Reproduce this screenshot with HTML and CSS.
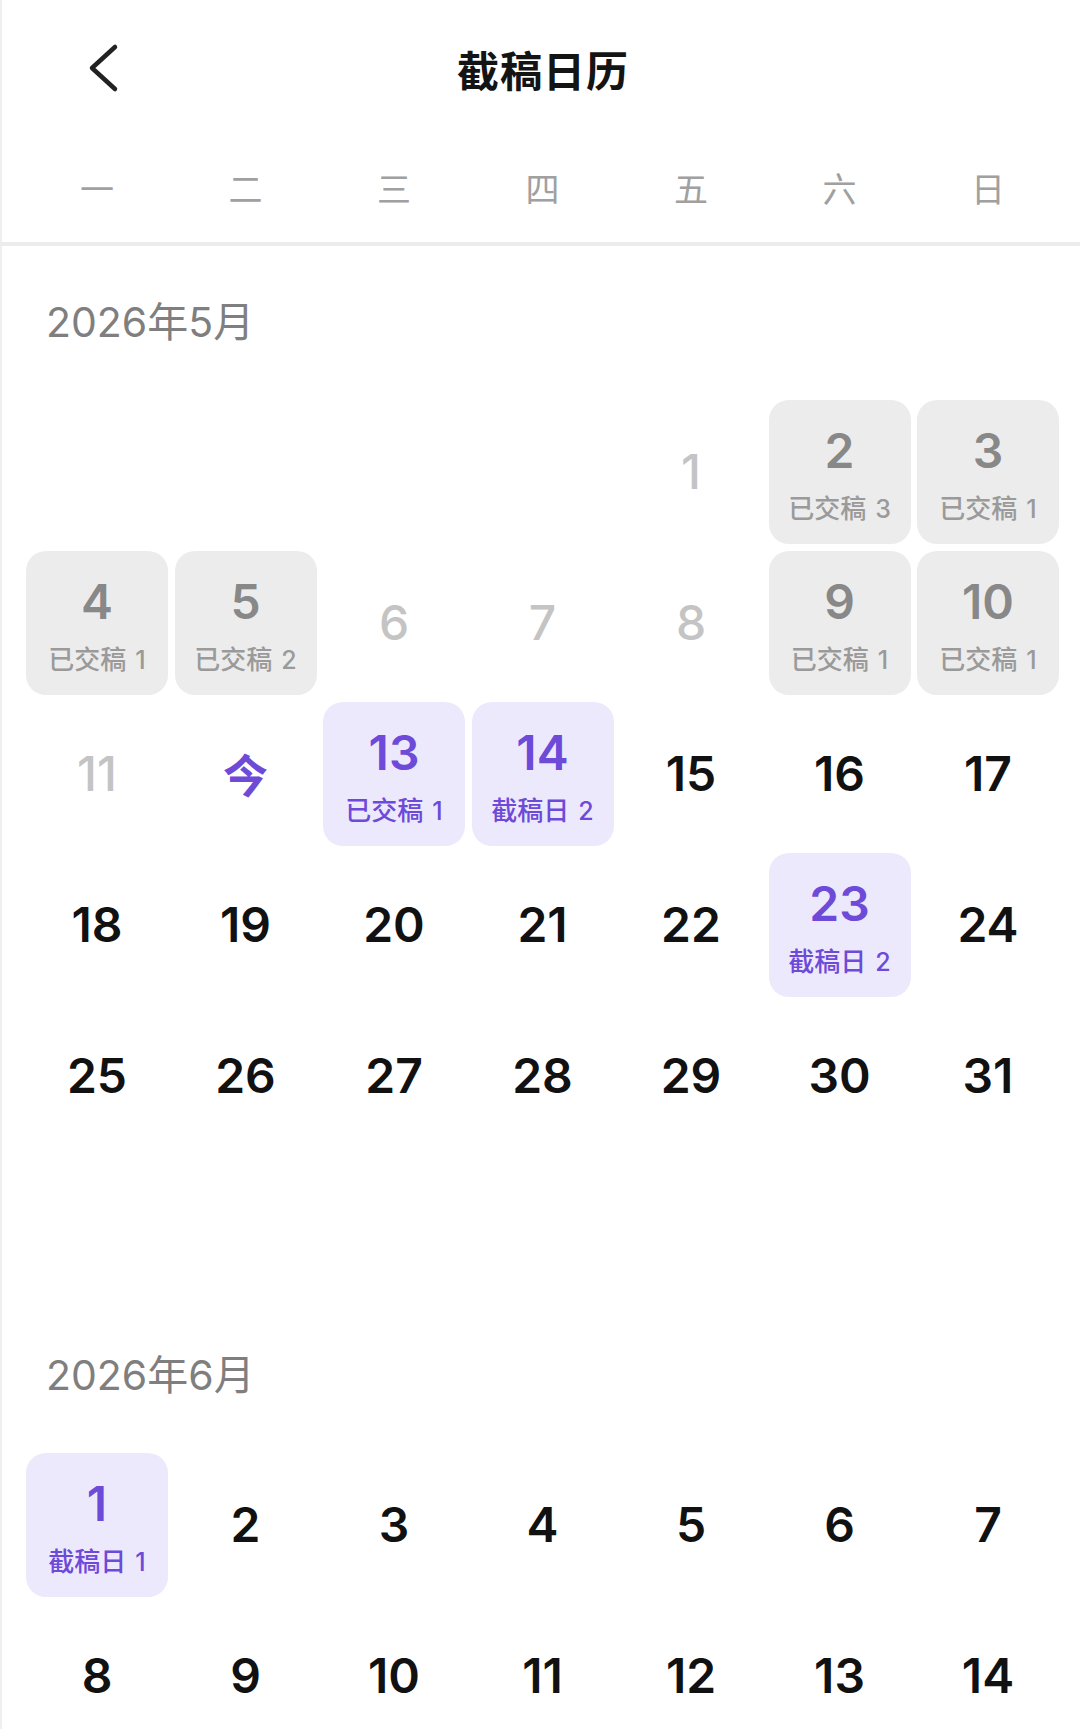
FILE: index.html
```html
<!DOCTYPE html>
<html lang="zh-CN">
<head>
    <meta charset="UTF-8">
    <meta name="viewport" content="width=device-width, initial-scale=1.0">
    <title>截稿日历</title>
    <link rel="stylesheet" href="styles.css">
</head>
<body>
    <!-- Top bar -->
    <header class="top-bar">
        <div class="back-btn">
            <svg width="34" height="52" viewBox="0 0 34 52">
                <polyline points="28,5 5,26 28,47" fill="none" stroke="#222" stroke-width="4.5" stroke-linecap="round" stroke-linejoin="round"/>
            </svg>
        </div>
        <h1 class="page-title">截稿日历</h1>
        <div></div>
    </header>

    <!-- Weekday header -->
    <div class="weekdays">
        <span>一</span><span>二</span><span>三</span><span>四</span><span>五</span><span>六</span><span>日</span>
    </div>

    <!-- Scrollable month list -->
    <div id="months" class="month-list"></div>

    <script>
        // day tags: kind "done" = grey (already handed in), otherwise purple
        const months = [
            {
                year: 2026, month: 5, past: 11, today: 12,
                tags: {
                    2: ['done', '已交稿', 3], 3: ['done', '已交稿', 1],
                    4: ['done', '已交稿', 1], 5: ['done', '已交稿', 2],
                    9: ['done', '已交稿', 1], 10: ['done', '已交稿', 1],
                    13: ['sub', '已交稿', 1], 14: ['due', '截稿日', 2],
                    23: ['due', '截稿日', 2]
                }
            },
            {
                year: 2026, month: 6, past: 0, today: 0,
                tags: { 1: ['due', '截稿日', 1] }
            }
        ];

        const container = document.getElementById('months');

        months.forEach(m => {
            const section = document.createElement('section');
            section.className = 'month';

            const title = document.createElement('div');
            title.className = 'month-title';
            title.textContent = `${m.year}年${m.month}月`;
            section.appendChild(title);

            const grid = document.createElement('div');
            grid.className = 'day-grid';

            // Monday first
            const firstDay = (new Date(m.year, m.month - 1, 1).getDay() + 6) % 7;
            const daysInMonth = new Date(m.year, m.month, 0).getDate();

            for (let i = 0; i < firstDay; i++) {
                grid.appendChild(document.createElement('div'));
            }

            for (let d = 1; d <= daysInMonth; d++) {
                const cell = document.createElement('div');
                cell.className = 'day';
                const tag = m.tags[d];

                if (tag) {
                    cell.classList.add('tagged', tag[0] === 'done' ? 'is-done' : 'is-active');
                    cell.innerHTML = `<span class="num">${d}</span><span class="tag">${tag[1]}<span class="count">${tag[2]}</span></span>`;
                } else if (d === m.today) {
                    cell.classList.add('is-today');
                    cell.innerHTML = `<span class="num">今</span>`;
                } else {
                    if (d <= m.past) cell.classList.add('is-past');
                    cell.innerHTML = `<span class="num">${d}</span>`;
                }
                grid.appendChild(cell);
            }

            section.appendChild(grid);
            container.appendChild(section);
        });
    </script>
</body>
</html>
```

FILE: styles.css
```css
/* Page */
body {
    margin: 0;
    width: 1080px;
    height: 100vh;
    display: flex;
    flex-direction: column;
    overflow: hidden;
    background: #fff;
    color: #111;
    font-family: Inter, "Noto Sans CJK SC", sans-serif;
    box-shadow: inset 2px 0 0 #efefef;
}

/* Top bar */
.top-bar {
    flex: none;
    height: 136px;
    display: grid;
    grid-template-columns: 1fr auto 1fr;
    align-items: center;
}

.back-btn {
    padding-left: 87px;
    display: flex;
    align-items: center;
}

.page-title {
    margin: 0;
    font-size: 42px;
    font-weight: 700;
    color: #141414;
    letter-spacing: 1px;
    padding-left: 6px;
}

/* Weekdays */
.weekdays {
    flex: none;
    height: 103px;
    padding-bottom: 3px;
    display: grid;
    grid-template-columns: repeat(7, 142px);
    column-gap: 6.5px;
    padding-left: 26px;
    align-items: center;
    border-bottom: 4px solid #ececec;
}

.weekdays span {
    text-align: center;
    font-family: "Noto Sans CJK SC", sans-serif;
    font-size: 34px;
    font-weight: 400;
    color: #a0a0a0;
}

/* Month list scrolls under the fixed header */
.month-list {
    flex: 1;
    overflow-y: auto;
    scrollbar-width: none;
}

/* Month block */
.month-title {
    height: 146px;
    padding-bottom: 8px;
    display: flex;
    align-items: center;
    padding-left: 46px;
    font-size: 41px;
    color: #7f7f7f;
}

.day-grid {
    display: grid;
    grid-template-columns: repeat(7, 142px);
    grid-template-rows: repeat(6, 144px);
    column-gap: 6.5px;
    row-gap: 7px;
    padding-left: 26px;
}

.day {
    display: flex;
    flex-direction: column;
    align-items: center;
    justify-content: center;
    border-radius: 20px;
}

.day .num {
    font-size: 48px;
    line-height: 56px;
    font-weight: 600;
    color: #111;
}

.day .tag {
    margin-top: 13px;
    font-size: 26px;
    line-height: 30px;
    font-weight: 500;
    font-family: "Noto Sans CJK SC", sans-serif;
    white-space: nowrap;
}

.day .tag .count {
    margin-left: 9px;
    font-family: Inter, sans-serif;
    font-weight: 500;
    font-size: 25px;
}

.day.tagged {
    padding-top: 3px;
    box-sizing: border-box;
}

/* States */
.day.is-past .num {
    color: #c4c4c4;
    font-weight: 500;
}

.day.is-done {
    background: #ececec;
}

.day.is-done .num {
    color: #888;
}

.day.is-done .tag {
    color: #9a9a9a;
}

.day.is-active {
    background: #ede9fc;
}

.day.is-active .num,
.day.is-active .tag {
    color: #6e4ad9;
}

.day.is-today .num {
    color: #6e4ad9;
    font-family: "Noto Sans CJK SC", sans-serif;
    font-weight: 700;
    font-size: 45px;
}
```
